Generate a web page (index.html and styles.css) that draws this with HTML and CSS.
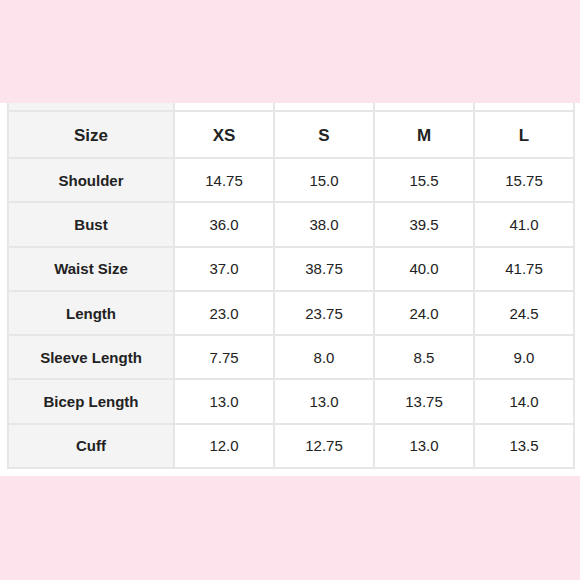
FILE: index.html
```html
<!DOCTYPE html>
<html>
<head>
<meta charset="utf-8">
<link rel="stylesheet" href="styles.css">
</head>
<body>
<div class="band band-top"></div>
<div class="sheet">
  <table class="sizes">
    <colgroup>
      <col class="c-label"><col class="c-val"><col class="c-val"><col class="c-val"><col class="c-val">
    </colgroup>
    <tr class="cut"><td class="label"></td><td></td><td></td><td></td><td></td></tr>
    <tr class="head"><td class="label">Size</td><td>XS</td><td>S</td><td>M</td><td>L</td></tr>
    <tr><td class="label">Shoulder</td><td>14.75</td><td>15.0</td><td>15.5</td><td>15.75</td></tr>
    <tr><td class="label">Bust</td><td>36.0</td><td>38.0</td><td>39.5</td><td>41.0</td></tr>
    <tr><td class="label">Waist Size</td><td>37.0</td><td>38.75</td><td>40.0</td><td>41.75</td></tr>
    <tr><td class="label">Length</td><td>23.0</td><td>23.75</td><td>24.0</td><td>24.5</td></tr>
    <tr><td class="label">Sleeve Length</td><td>7.75</td><td>8.0</td><td>8.5</td><td>9.0</td></tr>
    <tr><td class="label">Bicep Length</td><td>13.0</td><td>13.0</td><td>13.75</td><td>14.0</td></tr>
    <tr><td class="label">Cuff</td><td>12.0</td><td>12.75</td><td>13.0</td><td>13.5</td></tr>
  </table>
</div>
<div class="band band-bottom"></div>
</body>
</html>
```
FILE: styles.css
```css
html, body {
  margin: 0;
  padding: 0;
  background: #ffffff;
}
body {
  width: 580px;
  height: 580px;
  overflow: hidden;
  font-family: "Liberation Sans", Arial, sans-serif;
  color: #222222;
}
.band {
  background: #fde4ec;
}
.band-top {
  height: 103px;
}
.band-bottom {
  height: 104px;
}
.sheet {
  height: 373px;
  padding: 0 6px 0 7px;
  box-sizing: border-box;
}
.sizes {
  border-collapse: collapse;
  table-layout: fixed;
  width: 567px;
}
.c-label { width: 166px; }
.c-val { width: 100px; }
.sizes td {
  border: 2px solid #e6e6e6;
  text-align: center;
  vertical-align: middle;
  padding: 0;
  height: 44.3px;
  font-size: 15px;
  box-sizing: border-box;
}
.sizes td.label {
  background: #f4f4f4;
  font-weight: bold;
}
.sizes tr.cut td {
  height: 8px;
  border-top: none;
}
.sizes tr.head td {
  height: 47px;
  padding-top: 2px;
  font-size: 17px;
  font-weight: bold;
}
```
